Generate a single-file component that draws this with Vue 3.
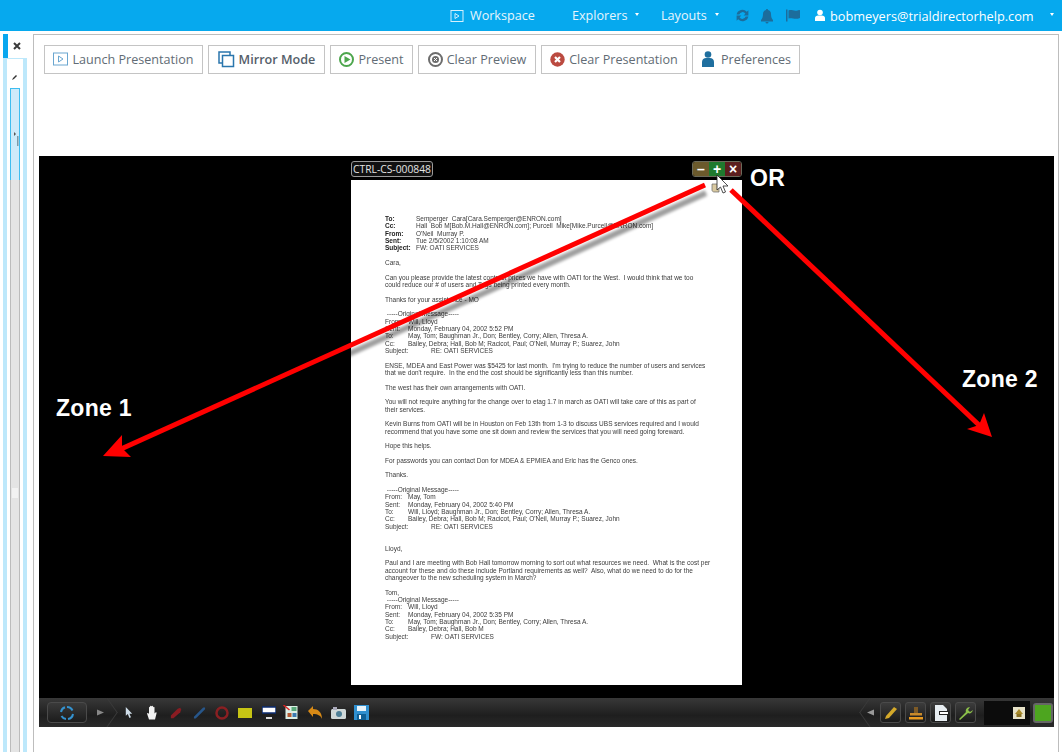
<script setup>
const docLines = [
  ['b','To:','Semperger  Cara[Cara.Semperger@ENRON.com]'],
  ['b','Cc:','Hall  Bob M[Bob.M.Hall@ENRON.com]; Purcell  Mike[Mike.Purcell@ENRON.com]'],
  ['b','From:',"O'Neil  Murray P."],
  ['b','Sent:','Tue 2/5/2002 1:10:08 AM'],
  ['b','Subject:','FW: OATI SERVICES'],
  [],
  ['p','Cara,'],
  [],
  ['p','Can you please provide the latest contract prices we have with OATI for the West.  I would think that we too'],
  ['p','could reduce our # of users and Tags being printed every month.'],
  [],
  ['p','Thanks for your assistance - MO'],
  [],
  ['p',' -----Original Message-----'],
  ['m','From:','Will, Lloyd'],
  ['m','Sent:','Monday, February 04, 2002 5:52 PM'],
  ['m','To:','May, Tom; Baughman Jr., Don; Bentley, Corry; Allen, Thresa A.'],
  ['m','Cc:','Bailey, Debra; Hall, Bob M; Racicot, Paul; O\'Neil, Murray P.; Suarez, John'],
  ['s','Subject:','RE: OATI SERVICES'],
  [],
  ['p',"ENSE, MDEA and East Power was $5425 for last month.  I'm trying to reduce the number of users and services"],
  ['p',"that we don't require.  In the end the cost should be significantly less than this number."],
  [],
  ['p','The west has their own arrangements with OATI.'],
  [],
  ['p','You will not require anything for the change over to etag 1.7 in march as OATI will take care of this as part of'],
  ['p','their services.'],
  [],
  ['p','Kevin Burns from OATI will be in Houston on Feb 13th from 1-3 to discuss UBS services required and I would'],
  ['p','recommend that you have some one sit down and review the services that you will need going foreward.'],
  [],
  ['p','Hope this helps.'],
  [],
  ['p','For passwords you can contact Don for MDEA & EPMIEA and Eric has the Genco ones.'],
  [],
  ['p','Thanks.'],
  [],
  ['p',' -----Original Message-----'],
  ['m','From:','May, Tom'],
  ['m','Sent:','Monday, February 04, 2002 5:40 PM'],
  ['m','To:','Will, Lloyd; Baughman Jr., Don; Bentley, Corry; Allen, Thresa A.'],
  ['m','Cc:','Bailey, Debra; Hall, Bob M; Racicot, Paul; O\'Neil, Murray P.; Suarez, John'],
  ['s','Subject:','RE: OATI SERVICES'],
  [],
  [],
  ['p','Lloyd,'],
  [],
  ['p','Paul and I are meeting with Bob Hall tomorrow morning to sort out what resources we need.  What is the cost per'],
  ['p','account for these and do these include Portland requirements as well?  Also, what do we need to do for the'],
  ['p','changeover to the new scheduling system in March?'],
  [],
  ['p','Tom,'],
  ['p',' -----Original Message-----'],
  ['m','From:','Will, Lloyd'],
  ['m','Sent:','Monday, February 04, 2002 5:35 PM'],
  ['m','To:','May, Tom; Baughman Jr., Don; Bentley, Corry; Allen, Thresa A.'],
  ['m','Cc:','Bailey, Debra; Hall, Bob M'],
  ['s','Subject:','FW: OATI SERVICES'],
]
</script>

<template>
  <div class="page">
    <header class="topbar">
      <span class="nav workspace">
        <svg width="14" height="14" viewBox="0 0 14 14"><rect x="1" y="1.500" width="12" height="11" fill="none" stroke="#d5f0fc"/><path d="M5 4.500v5l4-2.500z" fill="none" stroke="#d5f0fc"/></svg>
        Workspace
      </span>
      <span class="nav explorers">Explorers <i class="caret"></i></span>
      <span class="nav layouts">Layouts <i class="caret"></i></span>
      <svg class="tico refresh" width="15" height="15" viewBox="0 0 14 14"><path d="M1.500 6a5.500 5.500 0 0 1 9.500-2.500l1.500-1.500V7H8l1.700-1.700A3.200 3.200 0 0 0 4 6zM12.500 8A5.500 5.500 0 0 1 3 10.500l-1.500 1.500V7H6L4.300 8.700A3.200 3.200 0 0 0 10 8z" fill="#1c6d9c"/></svg>
      <svg class="tico bell" width="14" height="16" viewBox="0 0 14 15"><path d="M7 .5c.8 0 1 .5 1 1 2 .5 3 2 3 4 0 3 .8 5 2 6v1.500H1V11.500C2.200 10.500 3 8.500 3 5.500c0-2 1-3.500 3-4 0-.5.200-1 1-1zM5.500 13.500h3a1.500 1.500 0 0 1-3 0z" fill="#1c6d9c"/></svg>
      <svg class="tico flag" width="16" height="15" viewBox="0 0 16 14"><path d="M1 1h1.500v12H1zM3.500 2c3-1.500 5 1 9 0 1-.2 2.500-.5 2.500-.5v8c-5 2-8-.5-11.500.5z" fill="#1c6d9c"/></svg>
      <span class="nav user">
        <svg width="10" height="13" viewBox="0 0 10 12"><circle cx="5" cy="3" r="2.800" fill="#fff"/><path d="M0 11.500V8.500C0 7 1.500 6 3 6h4c1.500 0 3 1 3 2.500v3z" fill="#fff"/></svg>
        bobmeyers@trialdirectorhelp.com <i class="caret wide"></i>
      </span>
    </header>

    <div class="body">
      <aside class="side">
        <div class="tabrow">
          <span class="tabmark"></span>
          <svg class="xmark" width="8" height="8" viewBox="0 0 8 8"><path d="M1 1l6 6M7 1L1 7" stroke="#3a3a3a" stroke-width="2"/></svg>
        </div>
        <div class="sidepanel">
          <svg class="pen" width="8" height="8" viewBox="0 0 8 8"><path d="M1 7l1-2 3-3 1 1-3 3z" fill="#333"/></svg>
          <div class="scroll">
            <div class="thumb">
              <svg class="grip" width="5" height="14" viewBox="0 0 5 14"><path d="M0 0l2 2-2 2z" fill="#555"/><rect x="3" y="4" width="1.500" height="10" fill="#7f9aa8"/></svg>
            </div>
            <div class="track"><span class="mid"></span></div>
          </div>
        </div>
      </aside>

      <main class="main">
        <div class="toolbar">
          <button class="btn b1">
            <svg width="15" height="14" viewBox="0 0 15 14"><rect x=".5" y="1" width="14" height="12" fill="#fff" stroke="#6aa6d0"/><path d="M5.500 4v6l4.500-3z" fill="none" stroke="#6aa6d0"/></svg>
            Launch Presentation
          </button>
          <button class="btn b2 strong">
            <svg width="17" height="17" viewBox="0 0 17 17"><rect x="1" y="1" width="11" height="11" fill="none" stroke="#2a76ad" stroke-width="1.500"/><rect x="4.500" y="4.500" width="11" height="11" fill="#fff" stroke="#2a76ad" stroke-width="1.500"/></svg>
            Mirror Mode
          </button>
          <button class="btn b3">
            <svg width="15" height="15" viewBox="0 0 15 15"><circle cx="7.500" cy="7.500" r="6.500" fill="#fff" stroke="#4da64d" stroke-width="2"/><path d="M5.500 4v7l6-3.500z" fill="#4da64d"/></svg>
            Present
          </button>
          <button class="btn b4">
            <svg width="15" height="15" viewBox="0 0 15 15"><circle cx="7.500" cy="7.500" r="6.500" fill="#fff" stroke="#6d6d6d" stroke-width="2"/><circle cx="7.500" cy="7.500" r="3.500" fill="#6d6d6d"/><path d="M6 6l3 3M9 6l-3 3" stroke="#fff"/></svg>
            Clear Preview
          </button>
          <button class="btn b5">
            <svg width="15" height="15" viewBox="0 0 15 15"><circle cx="7.500" cy="7.500" r="7.200" fill="#bb4a40"/><path d="M5 5l5 5M10 5l-5 5" stroke="#fff" stroke-width="2.200"/></svg>
            Clear Presentation
          </button>
          <button class="btn b6">
            <svg width="14" height="16" viewBox="0 0 14 16"><circle cx="7" cy="3.500" r="3.300" fill="#1f6f9f"/><path d="M1 16v-5c0-2.500 2-4 4-4h4c2 0 4 1.500 4 4v5z" fill="#1f6f9f"/></svg>
            Preferences
          </button>
        </div>

        <section class="stage">
          <div class="viewer">
            <div class="dochead">
              <span class="doclabel">CTRL-CS-000848</span>
              <div class="zoomctl">
                <span class="zb minus">–</span>
                <span class="zb plus">+</span>
                <span class="zb close">×</span>
              </div>
            </div>
            <article class="doc">
              <div v-for="(l, i) in docLines" :key="i" class="ln" :class="l[0]">
                <template v-if="l.length === 3"><span class="k">{{ l[1] }}</span><span>{{ l[2] }}</span></template>
                <template v-else-if="l.length === 2">{{ l[1] }}</template>
              </div>
            </article>
          </div>

          <svg class="marks" width="1015" height="542" viewBox="39 156 1015 542">
            <defs>
              <filter id="sh" x="-10%" y="-10%" width="120%" height="120%"><feGaussianBlur stdDeviation="1.500"/></filter>
            </defs>
            <path d="M705 188L121 451" stroke="#000" stroke-width="6" opacity=".38" filter="url(#sh)" transform="translate(1 5)"/>
            <path d="M705 185L121 449" stroke="#f00" stroke-width="5"/>
            <path d="M103 456L122 435 122 448 131 457z" fill="#f00"/>
            <path d="M731 190L980 426" stroke="#f00" stroke-width="5"/>
            <path d="M992 437L984 413 979 425 967 429z" fill="#f00"/>
            <path d="M712 184h7v8h-5c-1 0-2-1-2-2z" fill="#d9c9a0" stroke="#666" stroke-width=".7"/>
            <path d="M717 175v15l3.500-3 2.500 6 2.500-1-2.500-6h5z" fill="#fff" stroke="#222" stroke-width=".8"/>
          </svg>
          <span class="note or">OR</span>
          <span class="note z1">Zone 1</span>
          <span class="note z2">Zone 2</span>
        </section>

        <div class="dock">
          <div class="dockleft">
            <span class="syncbtn">
              <svg width="16" height="16" viewBox="0 0 16 16"><path d="M8 2a6 6 0 0 1 5.500 3.500M14 9A6 6 0 0 1 9 14M7 14a6 6 0 0 1-4.500-3M2 7a6 6 0 0 1 4-4.800" fill="none" stroke="#3492cf" stroke-width="2"/></svg>
            </span>
            <span class="arrow">
              <svg width="7" height="7" viewBox="0 0 7 6"><path d="M0 0l7 3-7 3z" fill="#888"/></svg>
            </span>
            <svg class="ti t1" width="8" height="15" viewBox="0 0 10 14"><path d="M1 0v11l2.500-2.200L5.500 14l2-1-2-4.500H9z" fill="#cfdde8"/></svg>
            <svg class="ti t2" width="10" height="15" viewBox="0 0 10 14"><path d="M2 14L0 8c.5-1 1.500-.5 2 .5V2c0-1 1-1 1 0v3V1c0-1 1.500-1 1.500 0v4V1c0-1 1.500-1 1.500 0v4V2c0-1 1.500-1 1.500 0v6l1-1c.8-.5 1.200 0 1 1L8 14z" fill="#f2f2f2"/></svg>
            <svg class="ti t3" width="12" height="14" viewBox="0 0 14 14"><path d="M1 13v-3l8-8 3-1 1 2-1 3-8 7z" fill="#8a1c22"/></svg>
            <svg class="ti t4" width="13" height="14" viewBox="0 0 14 14"><path d="M1 13v-2L11 1h2v2L3 13z" fill="#27568a"/></svg>
            <svg class="ti t5" width="14" height="14" viewBox="0 0 14 14"><circle cx="7" cy="7" r="5.500" fill="none" stroke="#8a1f22" stroke-width="2.500"/></svg>
            <svg class="ti t6" width="14" height="10" viewBox="0 0 14 10"><rect width="14" height="10" fill="#c6c414"/></svg>
            <svg class="ti t7" width="14" height="14" viewBox="0 0 14 14"><rect y="1" width="14" height="6" fill="#fff" stroke="#0c2c70" stroke-width="1.500"/><rect x="4" y="11" width="6" height="2" fill="#ddd"/></svg>
            <svg class="ti t8" width="16" height="15" viewBox="0 0 15 15"><rect x="2" y="1" width="12" height="13" fill="#dcefe6"/><rect x="8" y="2" width="5" height="4" fill="#5aa97a"/><rect x="4" y="8" width="4" height="4" fill="#b35a33"/><rect x="9" y="8" width="4" height="4" fill="#3c7ab0"/><path d="M0 0l6 5" stroke="#d22" stroke-width="1.500"/></svg>
            <svg class="ti t9" width="14" height="14" viewBox="0 0 14 14"><path d="M0 5l5-5v3c5 0 9 3 9 10-1-3-4-5-9-5v3z" fill="#d88a16"/></svg>
            <svg class="ti t10" width="15" height="12" viewBox="0 0 15 12"><rect y="2" width="15" height="10" rx="1.500" fill="#cfd8d8"/><rect x="2" y="0" width="4" height="3" fill="#aab"/><circle cx="8" cy="7" r="3" fill="#4d7f96"/></svg>
            <svg class="ti t11" width="15" height="15" viewBox="0 0 15 15"><rect width="15" height="15" fill="#2f8fcf"/><rect x="3" y="1" width="9" height="5" fill="#e8f3fa"/><rect x="3" y="9" width="9" height="6" fill="#0f5f95"/><rect x="5" y="10" width="2" height="4" fill="#fff"/></svg>
          </div>
          <div class="dockright">
            <span class="arrow flip"><svg width="7" height="7" viewBox="0 0 7 6"><path d="M7 0L0 3l7 3z" fill="#999"/></svg></span>
            <span class="sq"><svg width="16" height="16" viewBox="0 0 16 16"><path d="M2 14l1-3 8-9 3 2-8 9z" fill="#d4a92a"/></svg></span>
            <span class="sq"><svg width="16" height="16" viewBox="0 0 16 16"><rect x="6" y="2" width="4" height="6" fill="#7d5a26"/><rect x="2" y="8" width="12" height="2.500" fill="#c98a2a"/><rect x="1" y="12" width="14" height="2.500" fill="#e89a20"/></svg></span>
            <span class="sq"><svg width="16" height="18" viewBox="0 0 16 18"><path d="M2 1h8l4 4v12H2z" fill="#e8eef2"/><rect x="6" y="7" width="10" height="4" fill="#222"/><rect x="7" y="8" width="8" height="2" fill="#fff"/></svg></span>
            <span class="sq"><svg width="16" height="16" viewBox="0 0 16 16"><path d="M1 14l1 1 8-7c2 1 4 0 5-3l-3 2-2-2 2-3c-3 0-5 3-4 5z" fill="#8cc04a"/></svg></span>
            <span class="indic">
              <svg width="12" height="12" viewBox="0 0 12 12"><rect width="12" height="12" fill="#e7e2c8"/><path d="M6 2l4 5H2z" fill="#a88a2a"/><rect x="3.500" y="7" width="5" height="3" fill="#8a7020"/></svg>
            </span>
            <span class="greenbox"><span></span></span>
          </div>
        </div>
      </main>
    </div>
  </div>
</template>

<style>
html, body { margin: 0; background: #fff; }
</style>

<style scoped>
.page { width: 1062px; height: 752px; overflow: hidden; display: flex; flex-direction: column; font-family: "Open Sans", "Liberation Sans", sans-serif; background: #fff; }
.topbar { height: 31px; flex: none; background: #06a9ee; display: flex; align-items: center; color: #e6f6fd; font-size: 12.6px; padding-left: 450px; box-sizing: border-box; }
.nav { display: inline-flex; align-items: center; white-space: nowrap; }
.workspace { gap: 6px; width: 122px; }
.explorers { width: 89px; }
.layouts { width: 74px; }
.user { gap: 5px; color: #fff; font-size: 12.75px; }
.caret { display: inline-block; border: 2.5px solid transparent; border-top: 3px solid #fff; border-bottom: 0; margin-left: 8px; margin-top: -3px; }
.caret.wide { margin-left: 11px; }
.refresh { margin-right: 10px; }
.bell { margin-right: 11px; }
.flag { margin-right: 14px; }
.body { flex: 1; display: flex; min-height: 0; padding-top: 3px; box-sizing: border-box; }
.side { width: 33px; flex: none; padding-left: 3px; box-sizing: border-box; display: flex; flex-direction: column; }
.tabrow { height: 24px; display: flex; align-items: center; flex: none; }
.tabmark { width: 5px; height: 24px; background: #08a7ef; }
.xmark { margin-left: 5px; }
.sidepanel { width: 24px; flex: 1; box-sizing: border-box; border: 4px solid #bde8fb; border-bottom: 0; border-top-width: 1px; background: #fff; display: flex; flex-direction: column; align-items: center; }
.pen { margin-top: 14px; margin-bottom: 7px; }
.scroll { width: 10px; flex: 1; display: flex; flex-direction: column; }
.thumb { height: 92px; background: #cdeafa; border: 1px solid #3dbdf0; border-bottom: 0; box-sizing: border-box; position: relative; }
.grip { position: absolute; left: 3px; top: 43px; }
.track { flex: 1; background: #e4e4e4; position: relative; border-left: 1px solid #bbb; border-right: 1px solid #bbb; box-sizing: border-box; }
.mid { position: absolute; left: 1px; top: 308px; width: 6px; height: 10px; background: #f2f2f2; }
.main { flex: 1; margin-right: 3px; border: 1px solid #bdbdbd; border-bottom: 0; padding: 10px 4px 0 5px; display: flex; flex-direction: column; min-width: 0; background: #fff; }
.toolbar { display: flex; gap: 5px; padding-left: 5px; height: 29px; margin-bottom: 82px; flex: none; }
.btn { height: 29px; box-sizing: border-box; padding: 0 0 1px; background: #fff; border: 1px solid #c4c4c4; color: #626c75; font: 12.6px "Open Sans", "Liberation Sans", sans-serif; display: inline-flex; align-items: center; justify-content: center; gap: 4px; white-space: nowrap; }
.strong { font-weight: 600; color: #55606a; }
.b1 { width: 159px; }
.b2 { width: 117px; }
.b3 { width: 83px; }
.b4 { width: 118px; }
.b5 { width: 146px; }
.b6 { width: 108px; gap: 6px; }
.stage { position: relative; height: 542px; flex: none; background: #000; }
.viewer { width: 391px; margin-left: 312px; display: flex; flex-direction: column; }
.dochead { height: 24px; display: flex; align-items: center; justify-content: space-between; padding-top: 1px; box-sizing: border-box; }
.doclabel { height: 16px; box-sizing: border-box; border: 1px solid #9a9a9a; border-radius: 3px; padding: 0 1px; font: 10.3px/14px "Open Sans", "Liberation Sans", sans-serif; color: #e4e4e4; background: #111; white-space: nowrap; }
.zoomctl { display: flex; height: 16px; border: 1px solid #6a6a5a; border-radius: 3px; overflow: hidden; box-sizing: border-box; }
.zb { width: 16px; height: 14px; text-align: center; color: #fff; font: bold 14px/14px "Liberation Sans", sans-serif; }
.minus { background: #6b5a2c; }
.plus { background: #1f7a2e; }
.close { background: #5c1f1f; }
.doc { height: 505px; background: #fff; padding: 35px 0 0 34px; box-sizing: border-box; font: 6.5px/7.33px "Liberation Sans", sans-serif; color: #3a3a3a; filter: blur(.4px); overflow: hidden; }
.ln { height: 7.33px; white-space: pre; }
.k { display: inline-block; width: 23px; }
.b .k { width: 31px; font-weight: 700; color: #222; }
.s .k { width: 46px; }
.marks { position: absolute; left: 0; top: 0; pointer-events: none; }
.note { position: absolute; color: #fff; font: 700 23px/24px "Liberation Sans", sans-serif; letter-spacing: .3px; white-space: nowrap; }
.or { left: 711px; top: 10px; }
.z1 { left: 17px; top: 240px; }
.z2 { left: 923px; top: 211px; }
.dock { height: 29px; flex: none; background: linear-gradient(#383838, #1e1e1e 60%, #2a2a2a); display: flex; justify-content: space-between; align-items: center; }
.dockleft, .dockright { display: flex; align-items: center; height: 29px; }
.dockleft { padding-left: 8px; }
.syncbtn { width: 40px; height: 21px; box-sizing: border-box; border: 1px solid #4a4a4a; border-radius: 4px; background: linear-gradient(#3a3a3a, #1c1c1c); display: inline-flex; align-items: center; justify-content: center; }
.arrow { width: 38px; height: 29px; display: inline-flex; align-items: center; padding-left: 10px; box-sizing: border-box; position: relative; overflow: hidden; flex: none; }
.arrow::after { content: ""; position: absolute; left: 8px; top: 4px; width: 20px; height: 20px; border: solid #3a3a3a; border-width: 1px 1px 0 0; transform: rotate(45deg) skew(10deg, 10deg); }
.flip { width: 23px; padding-left: 10px; }
.flip::after { left: 4px; border-width: 0 0 1px 1px; }
.ti { flex: none; }
.t2 { margin-left: 14px; }
.t3 { margin-left: 13px; }
.t4 { margin-left: 11px; }
.t5 { margin-left: 9px; }
.t6 { margin-left: 9px; }
.t7 { margin-left: 10px; }
.t8 { margin-left: 7px; }
.t9 { margin-left: 9px; }
.t10 { margin-left: 9px; }
.t11 { margin-left: 8px; }
.sq { width: 21px; height: 21px; margin-right: 4px; border: 1px solid #4a4a4a; border-radius: 3px; background: linear-gradient(#3c3c3c, #1a1a1a); display: inline-flex; align-items: center; justify-content: center; box-sizing: border-box; }
.indic { width: 46px; height: 24px; margin-left: 4px; background: #0c0c0c; display: inline-flex; align-items: center; justify-content: flex-end; padding-right: 5px; box-sizing: border-box; }
.greenbox { width: 20px; height: 20px; margin: 0 1px 0 3px; border: 2px solid #666; border-radius: 3px; display: inline-flex; box-sizing: border-box; }
.greenbox span { flex: 1; background: #4da51f; }
</style>
